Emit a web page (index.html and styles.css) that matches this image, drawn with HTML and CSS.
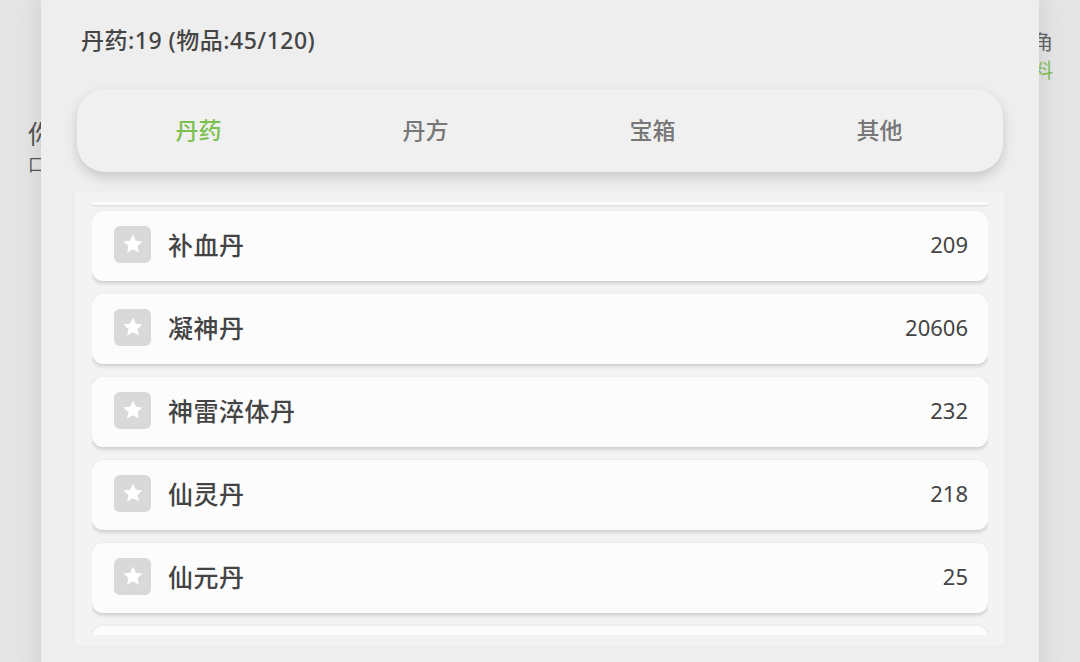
FILE: index.html
```html
<!DOCTYPE html>
<html lang="zh">
<head>
<meta charset="utf-8">
<link rel="stylesheet" href="styles.css">
</head>
<body>
<div class="page">
  <div class="bg-left">
    <div class="bg-title">你</div>
    <div class="bg-sub">口</div>
  </div>
  <div class="bg-right">
    <div class="bg-r1">角</div>
    <div class="bg-r2">料</div>
  </div>

  <div class="modal">
    <div class="summary">丹药:19 (物品:45/120)</div>
    <div class="tabs">
      <div class="tab active">丹药</div>
      <div class="tab">丹方</div>
      <div class="tab">宝箱</div>
      <div class="tab">其他</div>
    </div>
    <div class="list-wrap">
      <div class="list">
        <div class="prev-edge"></div>
        <div class="item">
          <span class="star"><svg viewBox="0 0 24 24" width="24" height="24"><path d="M12 2.6l2.85 6.1 6.65.75-4.95 4.55 1.35 6.6L12 17.3l-5.9 3.3 1.35-6.6L2.5 9.45l6.65-.75z" fill="#fff"/></svg></span>
          <span class="name">补血丹</span>
          <span class="count">209</span>
        </div>
        <div class="item">
          <span class="star"><svg viewBox="0 0 24 24" width="24" height="24"><path d="M12 2.6l2.85 6.1 6.65.75-4.95 4.55 1.35 6.6L12 17.3l-5.9 3.3 1.35-6.6L2.5 9.45l6.65-.75z" fill="#fff"/></svg></span>
          <span class="name">凝神丹</span>
          <span class="count">20606</span>
        </div>
        <div class="item">
          <span class="star"><svg viewBox="0 0 24 24" width="24" height="24"><path d="M12 2.6l2.85 6.1 6.65.75-4.95 4.55 1.35 6.6L12 17.3l-5.9 3.3 1.35-6.6L2.5 9.45l6.65-.75z" fill="#fff"/></svg></span>
          <span class="name">神雷淬体丹</span>
          <span class="count">232</span>
        </div>
        <div class="item">
          <span class="star"><svg viewBox="0 0 24 24" width="24" height="24"><path d="M12 2.6l2.85 6.1 6.65.75-4.95 4.55 1.35 6.6L12 17.3l-5.9 3.3 1.35-6.6L2.5 9.45l6.65-.75z" fill="#fff"/></svg></span>
          <span class="name">仙灵丹</span>
          <span class="count">218</span>
        </div>
        <div class="item">
          <span class="star"><svg viewBox="0 0 24 24" width="24" height="24"><path d="M12 2.6l2.85 6.1 6.65.75-4.95 4.55 1.35 6.6L12 17.3l-5.9 3.3 1.35-6.6L2.5 9.45l6.65-.75z" fill="#fff"/></svg></span>
          <span class="name">仙元丹</span>
          <span class="count">25</span>
        </div>
        <div class="item item-cut"></div>
      </div>
    </div>
  </div>
</div>
</body>
</html>
```

FILE: styles.css
```css
* { box-sizing: border-box; }
html, body {
  margin: 0;
  padding: 0;
  width: 1080px;
  height: 662px;
  overflow: hidden;
  background: #e5e5e5;
  font-family: "Noto Sans CJK SC", "Noto Sans", sans-serif;
}
.page {
  position: relative;
  width: 1080px;
  height: 662px;
  overflow: hidden;
}
.bg-left {
  position: absolute;
  left: 28px;
  top: 114px;
  color: #555;
}
.bg-title { font-size: 26px; line-height: 38px; }
.bg-sub { font-size: 17px; line-height: 20px; margin-top: 2px; }
.bg-right {
  position: absolute;
  left: 1033px;
  top: 28px;
  font-size: 20px;
  line-height: 28px;
}
.bg-r1 { color: #666; }
.bg-r2 { color: #7cc04f; }

.modal {
  position: absolute;
  left: 41px;
  top: 0;
  width: 998px;
  height: 680px;
  background: #eeeeee;
  box-shadow: 0 0 24px rgba(0,0,0,0.12);
  padding: 24px 35px 0 34px;
}
.summary {
  font-family: "Noto Sans", "Noto Sans CJK SC", sans-serif;
  font-size: 23px;
  line-height: 32px;
  letter-spacing: 0.5px;
  color: #454545;
  font-weight: 500;
  padding-left: 6px;
}
.tabs {
  margin-top: 33px;
  margin-left: 2px;
  width: 926px;
  height: 83px;
  border-radius: 28px;
  background: #f0f0f0;
  box-shadow: 0 5px 12px rgba(0,0,0,0.16);
  display: grid;
  grid-template-columns: repeat(4, 1fr);
  align-items: center;
  padding: 0 10px 4px 8px;
}
.tab {
  text-align: center;
  font-size: 23px;
  color: #777;
  font-weight: 500;
}
.tab.active { color: #7cc04f; }

.list-wrap {
  margin-top: 20px;
  width: 929px;
  height: 453px;
  background: #f3f3f3;
  padding: 10px 16px 10px 17px;
}
.list {
  height: 100%;
  overflow: hidden;
  display: flex;
  flex-direction: column;
  gap: 13px;
}
.prev-edge {
  flex: 0 0 3px;
  margin-bottom: -7px;
  background: #fcfcfc;
  box-shadow: 0 1px 2px rgba(0,0,0,0.12);
  border-radius: 0 0 10px 10px;
}
.item {
  flex: 0 0 70px;
  display: flex;
  align-items: center;
  background: #fcfcfc;
  border-radius: 11px;
  box-shadow: 0 2px 4px rgba(0,0,0,0.18);
  padding: 0 20px 4px 22px;
}
.star {
  width: 37px;
  height: 37px;
  border-radius: 6px;
  background: #d9d9d9;
  display: flex;
  align-items: center;
  justify-content: center;
  margin-right: 17px;
}
.name {
  font-size: 25px;
  letter-spacing: 0.5px;
  color: #444;
  font-weight: 500;
  flex: 1;
}
.count {
  font-size: 22px;
  color: #444;
  font-family: "Noto Sans", "Noto Sans CJK SC", sans-serif;
}
```
